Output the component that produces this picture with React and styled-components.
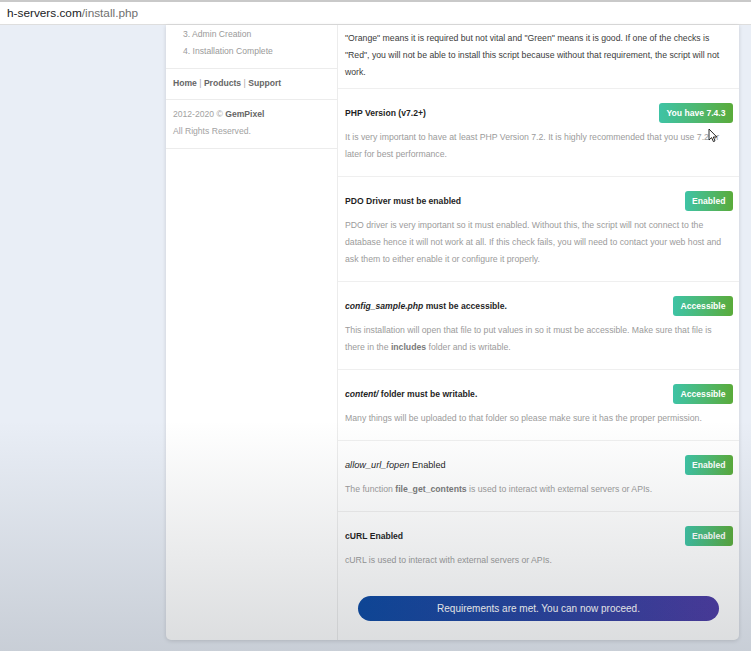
import React from 'react';
import styled, { createGlobalStyle } from 'styled-components';

const GlobalStyle = createGlobalStyle`
    * { box-sizing: border-box; }
    body {
        margin: 0;
        font-family: "Liberation Sans", Arial, sans-serif;
        background: #e9eef6;
    }
`;

const Page = styled.div`
    width: 751px;
    height: 651px;
    position: relative;
    overflow: hidden;
    display: flex;
    flex-direction: column;
    background: #e9eef6;
`;

const AddressBar = styled.div`
    height: 25px;
    flex-shrink: 0;
    display: flex;
    align-items: center;
    padding-left: 7px;
    background: #fff;
    border-top: 2px solid #c9c9c9;
    border-bottom: 1px solid #dedede;
    font-size: 11.8px;
    color: #202124;
`;

const UrlPath = styled.span`
    color: #6f6f6f;
`;

const Stage = styled.div`
    flex: 1;
    display: flex;
    align-items: flex-start;
    padding-left: 166px;
`;

const Card = styled.div`
    width: 573px;
    display: flex;
    background: #fff;
    border-radius: 0 0 5px 5px;
    box-shadow: 0 1px 4px rgba(0, 0, 0, 0.14);
`;

const Sidebar = styled.div`
    width: 172px;
    flex-shrink: 0;
    border-right: 1px solid #ececec;
`;

const SideBlock = styled.div`
    padding: ${p => p.$pad};
    border-bottom: 1px solid #ececec;
    font-size: 8.6px;
    line-height: 17px;
    color: #9a9a9a;
`;

const StepItem = styled.div`
    padding-left: 17px;
`;

const Links = styled.div`
    padding-left: 7px;
    font-weight: 700;
    color: #666;
`;

const Sep = styled.span`
    font-weight: 400;
    color: #aaa;
`;

const Footer = styled.div`
    padding-left: 7px;
    color: #a2a2a2;
`;

const Brand = styled.span`
    font-weight: 700;
    color: #666;
`;

const Main = styled.div`
    flex: 1;
    display: flex;
    flex-direction: column;
`;

const Intro = styled.p`
    margin: 0;
    padding: 4.5px 6px 7.5px 7px;
    border-bottom: 1px solid #efefef;
    font-size: 8.7px;
    line-height: 17px;
    color: #3c3c3c;
`;

const Check = styled.div`
    padding: 14px 6px 13px 7px;
    border-bottom: ${p => (p.$last ? 'none' : '1px solid #efefef')};
`;

const CheckHead = styled.div`
    height: 20px;
    display: flex;
    align-items: center;
    justify-content: space-between;
`;

const CheckTitle = styled.div`
    font-size: ${p => (p.$plain ? '9.2px' : '8.6px')};
    font-weight: ${p => (p.$plain ? 400 : 700)};
    color: #1f1f1f;
`;

const Badge = styled.span`
    height: 20px;
    display: inline-flex;
    align-items: center;
    padding: 0 7.5px;
    border-radius: 3px;
    background: linear-gradient(90deg, #3ec3a5 0%, #4db872 50%, #5aab3a 100%);
    color: #fff;
    font-size: 8.6px;
    font-weight: 700;
`;

const Desc = styled.p`
    margin: 6px 0 0;
    font-size: 8.7px;
    line-height: 17px;
    color: #9b9b9b;
`;

const Code = styled.span`
    font-weight: 700;
    color: #7a7a7a;
`;

const ButtonWrap = styled.div`
    padding: 13.5px 20px 19px;
`;

const ProceedButton = styled.button`
    width: 100%;
    height: 25px;
    border: none;
    border-radius: 13px;
    background: linear-gradient(90deg, #0a48a2 0%, #2a42a2 55%, #4c3aa4 100%);
    color: #fff;
    font-family: inherit;
    font-size: 10px;
    cursor: pointer;
`;

const Vignette = styled.div`
    position: absolute;
    inset: 0;
    pointer-events: none;
    background: linear-gradient(
        180deg,
        rgba(40, 50, 60, 0) 0px,
        rgba(40, 50, 60, 0) 420px,
        rgba(40, 50, 60, 0.17) 651px
    );
`;

const Cursor = styled.svg`
    position: absolute;
    left: 708px;
    top: 128px;
    width: 10px;
    height: 15px;
    pointer-events: none;
`;

const checks = [
    {
        title: 'PHP Version (v7.2+)',
        badge: 'You have 7.4.3',
        desc: 'It is very important to have at least PHP Version 7.2. It is highly recommended that you use 7.2 or later for best performance.',
    },
    {
        title: 'PDO Driver must be enabled',
        badge: 'Enabled',
        desc: 'PDO driver is very important so it must enabled. Without this, the script will not connect to the database hence it will not work at all. If this check fails, you will need to contact your web host and ask them to either enable it or configure it properly.',
    },
    {
        title: <><em>config_sample.php</em> must be accessible.</>,
        badge: 'Accessible',
        desc: <>This installation will open that file to put values in so it must be accessible. Make sure that file is there in the <Code>includes</Code> folder and is writable.</>,
    },
    {
        title: <><em>content/</em> folder must be writable.</>,
        badge: 'Accessible',
        desc: 'Many things will be uploaded to that folder so please make sure it has the proper permission.',
    },
    {
        title: <><em>allow_url_fopen</em> Enabled</>,
        plain: true,
        badge: 'Enabled',
        desc: <>The function <Code>file_get_contents</Code> is used to interact with external servers or APIs.</>,
    },
    {
        title: 'cURL Enabled',
        badge: 'Enabled',
        desc: 'cURL is used to interact with external servers or APIs.',
    },
];

export default function App() {
    return (
        <Page>
            <GlobalStyle />
            <AddressBar>
                h-servers.com<UrlPath>/install.php</UrlPath>
            </AddressBar>
            <Stage>
                <Card>
                    <Sidebar>
                        <SideBlock $pad="0.5px 0 8.5px">
                            <StepItem>3. Admin Creation</StepItem>
                            <StepItem>4. Installation Complete</StepItem>
                        </SideBlock>
                        <SideBlock $pad="6px 0 7px">
                            <Links>
                                Home <Sep>|</Sep> Products <Sep>|</Sep> Support
                            </Links>
                        </SideBlock>
                        <SideBlock $pad="5.5px 0 8px">
                            <Footer>
                                2012-2020 © <Brand>GemPixel</Brand>
                                <br />
                                All Rights Reserved.
                            </Footer>
                        </SideBlock>
                    </Sidebar>
                    <Main>
                        <Intro>
                            "Orange" means it is required but not vital and "Green" means it is good. If one of the checks is "Red", you will not be able to install this script because without that requirement, the script will not work.
                        </Intro>
                        {checks.map((c, i) => (
                            <Check key={i} $last={i === checks.length - 1}>
                                <CheckHead>
                                    <CheckTitle $plain={c.plain}>{c.title}</CheckTitle>
                                    <Badge>{c.badge}</Badge>
                                </CheckHead>
                                <Desc>{c.desc}</Desc>
                            </Check>
                        ))}
                        <ButtonWrap>
                            <ProceedButton>Requirements are met. You can now proceed.</ProceedButton>
                        </ButtonWrap>
                    </Main>
                </Card>
            </Stage>
            <Vignette />
            <Cursor viewBox="0 0 10 15">
                <path d="M1 1 L1 12 L3.6 9.6 L5.4 13.6 L7 12.9 L5.3 9 L8.8 9 Z" fill="#fff" stroke="#111" strokeWidth="0.9" strokeLinejoin="round" />
            </Cursor>
        </Page>
    );
}
